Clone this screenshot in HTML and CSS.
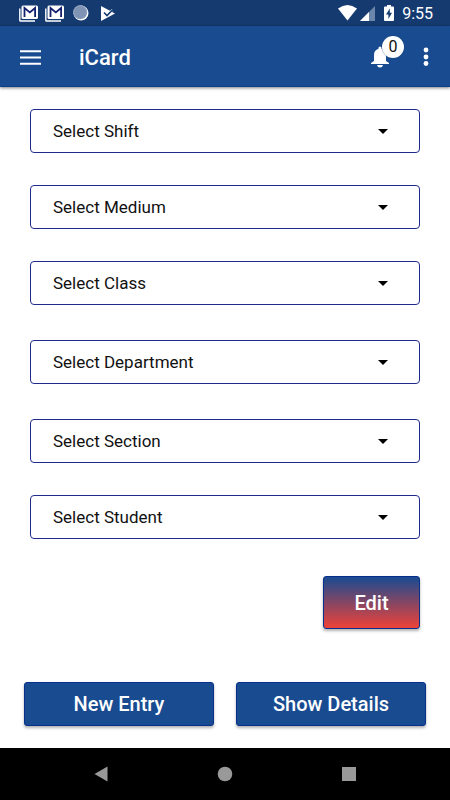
FILE: index.html
```html
<!DOCTYPE html>
<html lang="en">
<head>
<meta charset="utf-8">
<meta name="viewport" content="width=device-width, initial-scale=1">
<title>iCard</title>
<link rel="stylesheet" href="styles.css">
</head>
<body>
<div class="status-bar">
  <div class="status-left">
    <svg class="status-mail" width="20" height="17" viewBox="0 0 20 17" aria-hidden="true">
      <path d="M.8 3.500v11.700q0 .8.8.8H16" fill="none" stroke="#fff" stroke-width="1.400"/>
      <rect x="2.500" y="0.500" width="16.500" height="13.500" rx="1.500" fill="#fff"/>
      <path d="M5.500 12V3L10.800 7.400 16.100 3V12" fill="none" stroke="#15206e" stroke-width="1.800"/>
    </svg>
    <svg class="status-mail" width="20" height="17" viewBox="0 0 20 17" aria-hidden="true">
      <path d="M.8 3.500v11.700q0 .8.8.8H16" fill="none" stroke="#fff" stroke-width="1.400"/>
      <rect x="2.500" y="0.500" width="16.500" height="13.500" rx="1.500" fill="#fff"/>
      <path d="M5.500 12V3L10.800 7.400 16.100 3V12" fill="none" stroke="#15206e" stroke-width="1.800"/>
    </svg>
    <svg class="status-sync" width="16" height="16" viewBox="0 0 16 16" aria-hidden="true">
      <circle cx="8" cy="8" r="7.500" fill="#fff"/>
      <circle cx="7.200" cy="7.200" r="7" fill="#7f94b5"/>
      <circle cx="7.200" cy="7.200" r="6.500" fill="none" stroke="#a9b8cf" stroke-width="1" stroke-dasharray="1 1"/>
    </svg>
    <svg class="status-play" width="14" height="15" viewBox="0 0 14 15" aria-hidden="true">
      <path d="M0 0l9 4.800 2-1.800 1 1-1 2 3 1.500L0 15Z" fill="#fff"/>
      <path d="M3 6.500l3 3 6-6" fill="none" stroke="#143a70" stroke-width="1.600"/>
    </svg>
  </div>
  <div class="status-right">
    <svg width="19" height="16" viewBox="0 0 19 16" aria-hidden="true"><path d="M0 3.500Q9.500-3.500 19 3.500L9.500 15.500Z" fill="#fff"/></svg>
    <svg class="status-signal" width="15" height="15" viewBox="0 0 15 15" aria-hidden="true"><path d="M0 15L15 0V15Z" fill="#6c86ab"/><path d="M0 15L9 6V15Z" fill="#fff"/></svg>
    <svg class="status-battery" width="10" height="16" viewBox="0 0 10 16" aria-hidden="true"><path d="M3 0h4v1.500h2q1 0 1 1V15q0 1-1 1H1q-1 0-1-1V2.500q0-1 1-1h2Z" fill="#fff"/><path d="M5.800 3.500L2 9.500h2.400V14L8 7.800H5.800Z" fill="#143a70"/></svg>
    <span class="clock">9:55</span>
  </div>
</div>
<header class="app-bar">
  <button class="icon-button" type="button" aria-label="Menu">
    <svg width="21" height="15" viewBox="0 0 21 15"><path d="M0 1.250h21M0 7.500h21M0 13.750h21" stroke="#fff" stroke-width="2.200"/></svg>
  </button>
  <h1 class="title">iCard</h1>
  <button class="icon-button bell" type="button" aria-label="Notifications">
    <svg width="18" height="22" viewBox="0 0 18 22"><path d="M7.500 2q0-1.500 1.500-1.500T10.500 2v.700Q15 4 15 9v6l3 2v1H0v-1l3-2V9q0-5 4.500-6.300ZM6 19h6q-.5 2.500-3 2.500T6 19Z" fill="#fff"/></svg>
    <span class="badge">0</span>
  </button>
  <button class="icon-button" type="button" aria-label="More options">
    <svg width="6" height="20" viewBox="0 0 6 20"><g fill="#fff"><circle cx="3" cy="3" r="2.400"/><circle cx="3" cy="10" r="2.400"/><circle cx="3" cy="16.500" r="2.400"/></g></svg>
  </button>
</header>
<main class="content">
  <form class="form">
    <div class="field"><select class="select" aria-label="Shift"><option>Select Shift</option></select></div>
    <div class="field"><select class="select" aria-label="Medium"><option>Select Medium</option></select></div>
    <div class="field field-spaced"><select class="select" aria-label="Class"><option>Select Class</option></select></div>
    <div class="field field-spaced"><select class="select" aria-label="Department"><option>Select Department</option></select></div>
    <div class="field"><select class="select" aria-label="Section"><option>Select Section</option></select></div>
    <div class="field"><select class="select" aria-label="Student"><option>Select Student</option></select></div>
    <button class="button edit" type="button">Edit</button>
  </form>
  <div class="actions">
    <button class="button" type="button">New Entry</button>
    <button class="button" type="button">Show Details</button>
  </div>
</main>
<nav class="nav-bar" aria-label="System">
  <button class="nav-button" type="button" aria-label="Back"><svg width="14" height="16" viewBox="0 0 14 16"><path d="M13.500.5v15L.5 8Z" fill="#999"/></svg></button>
  <button class="nav-button" type="button" aria-label="Home"><svg width="16" height="16" viewBox="0 0 16 16"><circle cx="8" cy="8" r="7.300" fill="#999"/></svg></button>
  <button class="nav-button" type="button" aria-label="Recent apps"><svg width="14" height="14" viewBox="0 0 14 14"><path d="M0 0h14v14H0Z" fill="#999"/></svg></button>
</nav>
</body>
</html>
```
FILE: styles.css
```css
* {
  box-sizing: border-box;
}

body {
  margin: 0;
  min-height: 100vh;
  display: flex;
  flex-direction: column;
  background: #fff;
  color: #111;
  font-family: Roboto, "Liberation Sans", sans-serif;
}

svg {
  display: block;
}

button {
  font-family: inherit;
  padding: 0;
  border: 0;
}

.status-bar {
  display: flex;
  justify-content: space-between;
  height: 26px;
  padding: 0 17px 0 19px;
  background: #143a70;
  color: #fff;
}

.status-left,
.status-right {
  display: flex;
  align-items: center;
}

.status-mail {
  margin-right: 6px;
}

.status-sync {
  margin: 0 12px 0 2px;
}

.status-signal {
  margin: 0 9px 0 3px;
}

.clock {
  margin-left: 8px;
  font-size: 16px;
  line-height: 26px;
  padding-top: 2px;
}

.app-bar {
  display: flex;
  align-items: center;
  height: 61px;
  padding: 2px 21px 0 20px;
  background: #194b91;
  color: #fff;
  border-bottom: 1px solid #0d408c;
  box-shadow: 0 1px 3px rgba(0, 0, 0, 0.5);
}

.icon-button {
  background: none;
  color: inherit;
}

.title {
  flex: 1;
  margin: 0 0 0 38px;
  padding-top: 2px;
  font-size: 22px;
  line-height: 28px;
  font-weight: 500;
}

.bell {
  position: relative;
  margin-right: 34px;
}

.badge {
  position: absolute;
  left: 11px;
  top: -10px;
  width: 22px;
  height: 22px;
  border-radius: 50%;
  background: #fff;
  color: #111;
  font-size: 16px;
  line-height: 22px;
  box-shadow: 0 0 1px #143a70;
}

.content {
  flex: 1;
  padding: 22px 24px;
  display: flex;
  flex-direction: column;
  justify-content: space-between;
}

.form {
  display: flex;
  flex-direction: column;
  padding: 0 6px;
}

.field {
  position: relative;
  margin-bottom: 32px;
}

.field-spaced {
  margin-bottom: 35px;
}

.field::after {
  content: "";
  position: absolute;
  right: 32px;
  top: 20px;
  border: 5px solid transparent;
  border-top-color: #000;
  border-bottom: 0;
  pointer-events: none;
}

.select {
  display: block;
  appearance: none;
  width: 100%;
  height: 44px;
  padding: 0 48px 0 22px;
  border: 1px solid #1e2a8c;
  border-radius: 4px;
  background: #fff;
  color: #111;
  font-family: inherit;
  font-size: 17px;
}

.button {
  height: 44px;
  border: 1px solid #06308c;
  border-radius: 3px;
  background: #194b91;
  color: #fff;
  font-size: 20px;
  font-weight: 500;
  box-shadow: 0 2px 3px rgba(0, 0, 0, 0.3);
}

.edit {
  align-self: flex-end;
  width: 97px;
  height: 53px;
  margin-top: 5px;
  background: linear-gradient(#194b91, #ef4238);
}

.actions {
  display: grid;
  grid-template-columns: 1fr 1fr;
  gap: 22px;
}

.nav-bar {
  display: flex;
  justify-content: space-between;
  align-items: center;
  height: 52px;
  padding: 0 94px;
  background: #000;
}

.nav-button {
  background: none;
}
```
